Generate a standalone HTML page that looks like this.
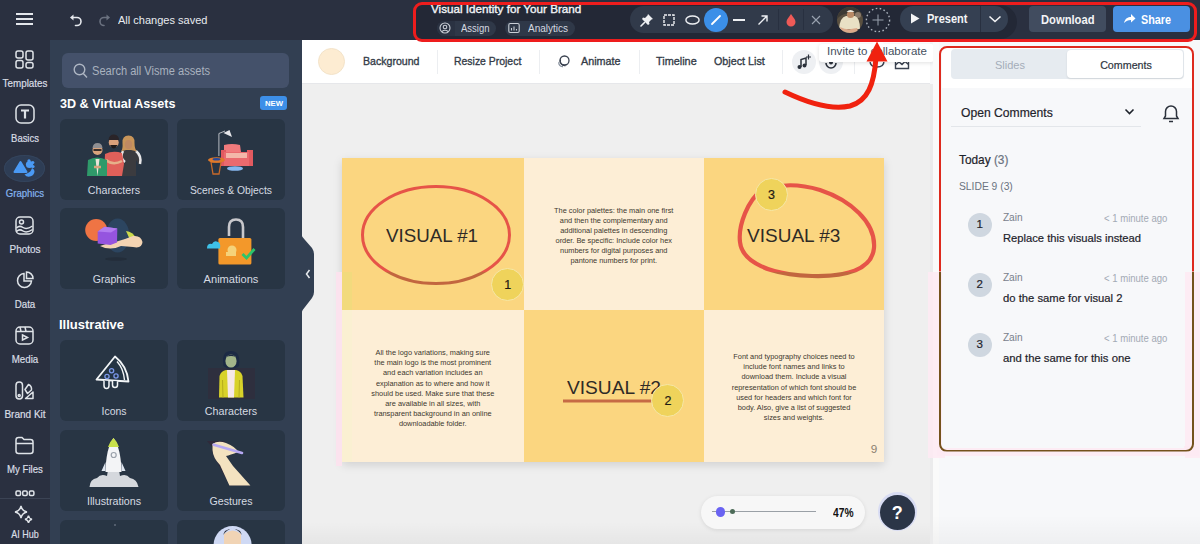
<!DOCTYPE html>
<html><head><meta charset="utf-8">
<style>
*{margin:0;padding:0;box-sizing:border-box}
html,body{width:1200px;height:544px;overflow:hidden;background:#efefef;font-family:"Liberation Sans",sans-serif}
.a{position:absolute}
.t{position:absolute;white-space:nowrap;line-height:1}
.sk{-webkit-text-stroke:0.35px currentColor}
.sk2{-webkit-text-stroke:0.2px currentColor}
.card{position:absolute;width:108px;height:81px;background:#283544;border-radius:6px}
.st{position:absolute;text-align:center;font-size:7.38px;line-height:10.17px;color:#40382e;white-space:nowrap}
.badge{position:absolute;width:33px;height:33px;border-radius:50%;background:#efd35b;border:1.5px solid #f6e7a8}
.sep{position:absolute;width:1px;background:#eceef1}
</style></head><body>
<div class="a" style="left:0;top:0;width:1200px;height:40px;background:#2a3040"></div>
<div class="a" style="left:0;top:40px;width:50px;height:504px;background:#2a3040"></div>
<div class="a" style="left:50px;top:40px;width:252px;height:504px;background:#323f52"></div>
<div class="a" style="left:302px;top:40px;width:631px;height:44px;background:#fff;border-bottom:1px solid #e6e7ea"></div>
<div class="a" style="left:302px;top:84px;width:631px;height:460px;background:#efefef"></div>
<div class="a" style="left:930px;top:40px;width:270px;height:504px;background:#f7f8fa"></div>


<div class="a" style="left:16px;top:13px;width:17px;height:2px;background:#e3e6eb"></div>
<div class="a" style="left:16px;top:18px;width:17px;height:2px;background:#e3e6eb"></div>
<div class="a" style="left:16px;top:23px;width:17px;height:2px;background:#e3e6eb"></div>
<svg class="a" style="left:68px;top:12px" width="16" height="16" viewBox="0 0 16 16"><path d="M4.5 5.5 H9 A4 4 0 0 1 9 13.5 H7.5" fill="none" stroke="#e6e9ee" stroke-width="1.6" stroke-linecap="round"/><path d="M2 5.5 L5.5 2.5 L5.5 8.5 Z" fill="#e6e9ee"/></svg>
<svg class="a" style="left:96px;top:12px" width="16" height="16" viewBox="0 0 16 16"><path d="M11.5 5.5 H8 A4 4 0 0 0 8 13.5" fill="none" stroke="#6b7280" stroke-width="1.6" stroke-linecap="round"/><path d="M14 5.5 L10.5 2.5 L10.5 8.5 Z" fill="#6b7280"/></svg>

<div class="t " id="t_saved" style="left:117.60px;top:14.57px;font-size:11.5px;color:#e8ebef;font-weight:normal;transform:scaleX(0.9588);transform-origin:left 0;">All changes saved</div>

<svg class="a" style="left:15px;top:50px" width="19" height="19" viewBox="0 0 19 19" fill="none" stroke="#dfe3e8" stroke-width="1.5"><rect x="1" y="1" width="7" height="7" rx="2"/><rect x="11" y="1" width="7" height="9" rx="2"/><rect x="1" y="10.5" width="7" height="7.5" rx="2"/><rect x="11" y="12.5" width="7" height="5.5" rx="2"/></svg>
<svg class="a" style="left:15px;top:104px" width="20" height="20" viewBox="0 0 20 20" fill="none" stroke="#dfe3e8" stroke-width="1.5"><rect x="1" y="1" width="18" height="18" rx="5"/><path d="M6 6.5 H14 M10 6.5 V14.5" stroke-width="2.2"/></svg>
<div class="a" style="left:4px;top:155px;width:40.5px;height:27px;border-radius:50%;background:#2e3d55;box-shadow:inset 0 0 0 1px #34445c"></div>
<svg class="a" style="left:10px;top:155px" width="30" height="28" viewBox="0 0 30 28"><path d="M10.5 7 L16.5 17 H4.5Z" fill="#4a9af5" stroke="#4a9af5" stroke-width="2" stroke-linejoin="round"/><circle cx="19.5" cy="9.5" r="3.6" fill="#4a9af5"/><circle cx="19" cy="5.8" r="1.6" fill="#4a9af5"/><circle cx="22.8" cy="7.5" r="1.6" fill="#4a9af5"/><circle cx="23" cy="11.5" r="1.6" fill="#4a9af5"/><path d="M14.5 19.5 A5.6 5.6 0 0 0 24.5 16 Q24 14 22 13 Q21 17 17 18.5Z" fill="#4a9af5"/></svg>
<svg class="a" style="left:15px;top:216px" width="19" height="19" viewBox="0 0 19 19" fill="none" stroke="#dfe3e8" stroke-width="1.5"><rect x="1" y="1" width="17" height="17" rx="4"/><circle cx="6.5" cy="6" r="2"/><path d="M1.5 12 Q4.5 9 8 11.5 T17.5 10"/><path d="M1.5 15.5 Q4.5 12.5 8 15 T17.5 13.5"/></svg>
<svg class="a" style="left:16px;top:271px" width="18" height="18" viewBox="0 0 18 18" fill="none" stroke="#dfe3e8" stroke-width="1.5"><path d="M8 2.5 A7 7 0 1 0 15.5 10 H8Z"/><path d="M10.5 1 A6.5 6.5 0 0 1 17 7.5 H10.5Z"/></svg>
<svg class="a" style="left:15px;top:325.5px" width="19" height="19" viewBox="0 0 19 19" fill="none" stroke="#dfe3e8" stroke-width="1.5"><rect x="1" y="1" width="17" height="17" rx="4"/><path d="M1 5.5 H18 M5 1 L6 5.5 M10 1 L11 5.5"/><path d="M7.5 9 L12.5 11.5 L7.5 14Z"/></svg>
<svg class="a" style="left:15px;top:381px" width="20" height="19" viewBox="0 0 20 19" fill="none" stroke="#dfe3e8" stroke-width="1.5" stroke-linejoin="round"><rect x="1" y="1" width="6.5" height="17" rx="3.2"/><path d="M10 8.5 L13.5 3.5 Q17 5 16.5 9 L12.5 12.5Z"/><path d="M10.5 17.5 L18 11 V17.5Z"/><circle cx="4.2" cy="14.5" r="1"/></svg>
<svg class="a" style="left:15px;top:436px" width="19" height="19" viewBox="0 0 19 19" fill="none" stroke="#dfe3e8" stroke-width="1.5"><path d="M1 4 Q1 1.5 3.5 1.5 H7 L9 3.5 H15.5 Q18 3.5 18 6 V15 Q18 17.5 15.5 17.5 H3.5 Q1 17.5 1 15Z"/><path d="M1 7.5 H18"/></svg>
<svg class="a" style="left:15px;top:490px" width="20" height="7" viewBox="0 0 20 7" fill="none" stroke="#dfe3e8" stroke-width="1.5"><rect x="1" y="1" width="4.5" height="4.5" rx="1.2"/><rect x="7.7" y="1" width="4.5" height="4.5" rx="1.2"/><rect x="14.4" y="1" width="4.5" height="4.5" rx="1.2"/></svg>
<div class="a" style="left:0;top:498px;width:50px;height:1px;background:#3b4354"></div>
<svg class="a" style="left:14px;top:505px" width="20" height="19" viewBox="0 0 20 19" fill="none" stroke="#dfe3e8" stroke-width="1.4"><path d="M7 1 Q8 6 13 7 Q8 8 7 13 Q6 8 1 7 Q6 6 7 1Z"/><path d="M14.5 10.5 Q15 13.5 18 14.3 Q15 15 14.5 18 Q14 15 11 14.3 Q14 13.5 14.5 10.5Z"/></svg>

<div class="t sk2" style="left:-125px;width:300px;text-align:center;top:78.78px;font-size:10.3px;color:#d9dde4;font-weight:normal;transform:scaleX(0.9545);transform-origin:center 0;"><span id="rl0">Templates</span></div>
<div class="t sk2" style="left:-125px;width:300px;text-align:center;top:134.08px;font-size:10.3px;color:#d9dde4;font-weight:normal;transform:scaleX(0.9166);transform-origin:center 0;"><span id="rl1">Basics</span></div>
<div class="t sk2" style="left:-125px;width:300px;text-align:center;top:188.78px;font-size:10.3px;color:#86b4ef;font-weight:normal;transform:scaleX(0.9295);transform-origin:center 0;"><span id="rl2">Graphics</span></div>
<div class="t sk2" style="left:-125px;width:300px;text-align:center;top:244.78px;font-size:10.3px;color:#d9dde4;font-weight:normal;transform:scaleX(0.9669);transform-origin:center 0;"><span id="rl3">Photos</span></div>
<div class="t sk2" style="left:-125px;width:300px;text-align:center;top:299.78px;font-size:10.3px;color:#d9dde4;font-weight:normal;transform:scaleX(0.9419);transform-origin:center 0;"><span id="rl4">Data</span></div>
<div class="t sk2" style="left:-125px;width:300px;text-align:center;top:355.08px;font-size:10.3px;color:#d9dde4;font-weight:normal;transform:scaleX(0.9448);transform-origin:center 0;"><span id="rl5">Media</span></div>
<div class="t sk2" style="left:-125px;width:300px;text-align:center;top:409.78px;font-size:10.3px;color:#d9dde4;font-weight:normal;transform:scaleX(0.9726);transform-origin:center 0;"><span id="rl6">Brand Kit</span></div>
<div class="t sk2" style="left:-125px;width:300px;text-align:center;top:464.78px;font-size:10.3px;color:#d9dde4;font-weight:normal;transform:scaleX(0.9340);transform-origin:center 0;"><span id="rl7">My Files</span></div>
<div class="t sk2" style="left:-125px;width:300px;text-align:center;top:529.88px;font-size:10.3px;color:#d9dde4;font-weight:normal;transform:scaleX(0.8734);transform-origin:center 0;"><span id="rl8">AI Hub</span></div>

<div class="a" style="left:62px;top:53px;width:227px;height:35px;background:#44516a;border-radius:6px"></div>
<svg class="a" style="left:73px;top:63px" width="15" height="16" viewBox="0 0 15 16" fill="none" stroke="#aeb6c3" stroke-width="1.4"><circle cx="6.5" cy="6.5" r="5.3"/><path d="M10.3 10.5 L14 14.5"/></svg>
<div class="a" style="left:260px;top:96px;width:27px;height:14px;background:#3d8fe8;border-radius:3px"></div>

<div class="t " id="t_search" style="left:92.10px;top:64.84px;font-size:12px;color:#a9b2bf;font-weight:normal;transform:scaleX(0.9230);transform-origin:left 0;">Search all Visme assets</div>
<div class="t " id="t_3d" style="left:59.60px;top:96.87px;font-size:13.5px;color:#ffffff;font-weight:bold;transform:scaleX(0.9329);transform-origin:left 0;">3D &amp; Virtual Assets</div>
<div class="t " style="left:123.5px;width:300px;text-align:center;top:99.53px;font-size:8px;color:#ffffff;font-weight:bold;transform:scaleX(0.9640);transform-origin:center 0;"><span id="t_new">NEW</span></div>
<div class="t " id="t_illus" style="left:59.10px;top:317.57px;font-size:13.5px;color:#ffffff;font-weight:bold;transform:scaleX(0.9625);transform-origin:left 0;">Illustrative</div>
<div class="card" style="left:60px;top:119px"></div>
<div class="card" style="left:177px;top:119px"></div>
<div class="card" style="left:60px;top:208px"></div>
<div class="card" style="left:177px;top:208px"></div>
<div class="card" style="left:60px;top:340px"></div>
<div class="card" style="left:177px;top:340px"></div>
<div class="card" style="left:60px;top:430px"></div>
<div class="card" style="left:177px;top:430px"></div>
<div class="card" style="left:60px;top:520px"></div>
<div class="card" style="left:177px;top:520px"></div>
<div class="t " style="left:-36px;width:300px;text-align:center;top:184.66px;font-size:10.8px;color:#d6dbe2;font-weight:normal;transform:scaleX(0.9903);transform-origin:center 0;"><span id="cl0">Characters</span></div>
<div class="t " style="left:81px;width:300px;text-align:center;top:184.66px;font-size:10.8px;color:#d6dbe2;font-weight:normal;transform:scaleX(0.9554);transform-origin:center 0;"><span id="cl1">Scenes &amp; Objects</span></div>
<div class="t " style="left:-36px;width:300px;text-align:center;top:273.66px;font-size:10.8px;color:#d6dbe2;font-weight:normal;transform:scaleX(0.9834);transform-origin:center 0;"><span id="cl2">Graphics</span></div>
<div class="t " style="left:81px;width:300px;text-align:center;top:273.66px;font-size:10.8px;color:#d6dbe2;font-weight:normal;transform:scaleX(1.0258);transform-origin:center 0;"><span id="cl3">Animations</span></div>
<div class="t " style="left:-36px;width:300px;text-align:center;top:405.66px;font-size:10.8px;color:#d6dbe2;font-weight:normal;transform:scaleX(0.9685);transform-origin:center 0;"><span id="cl4">Icons</span></div>
<div class="t " style="left:81px;width:300px;text-align:center;top:405.66px;font-size:10.8px;color:#d6dbe2;font-weight:normal;transform:scaleX(0.9903);transform-origin:center 0;"><span id="cl5">Characters</span></div>
<div class="t " style="left:-36px;width:300px;text-align:center;top:495.66px;font-size:10.8px;color:#d6dbe2;font-weight:normal;transform:scaleX(0.9888);transform-origin:center 0;"><span id="cl6">Illustrations</span></div>
<div class="t " style="left:81px;width:300px;text-align:center;top:495.66px;font-size:10.8px;color:#d6dbe2;font-weight:normal;transform:scaleX(0.9815);transform-origin:center 0;"><span id="cl7">Gestures</span></div>
<!-- ILLUSTRATIONS -->
<svg class="a" style="left:0;top:0" width="302" height="544" viewBox="0 0 302 544">
<!-- characters 3D -->
<path d="M121 176 L121 152 Q128 148 136 151 L141 160 L139 165 L136 160 L136 176Z" fill="#3b3b3f"/>
<path d="M123 151 Q119 158 125 162 M136 151 Q142 156 140 164" stroke="#e8e8ea" stroke-width="2.5" fill="none"/>
<path d="M122.5 143 Q122 135.5 128.5 135.5 Q135 135.5 134.5 143 Q134.5 149 137 151.5 L131 150 L126 150 L121 151.5 Q123 149 122.5 143Z" fill="#c8955a"/>
<ellipse cx="128.5" cy="144.5" rx="3.6" ry="4.5" fill="#c08a62"/>
<path d="M104 176 L105 154 Q113 150 122 153 L124 164 L122 176Z" fill="#e0605a"/>
<path d="M106 160 Q113 166 122 161" stroke="#e6b08a" stroke-width="2.5" fill="none"/>
<circle cx="113.7" cy="142.5" r="5" fill="#d9a07a"/>
<path d="M108.5 140 Q109 134.5 114 134.5 Q119 135 119 140Z" fill="#2a2428"/>
<path d="M110 145 Q113.7 152 117.5 145Z" fill="#1f1a1a"/>
<path d="M87 176 L88 160 Q97 155 107 160 L107 176Z" fill="#2f9a6a"/>
<path d="M95.5 159 L97.5 176 L99.5 159Z" fill="#e9e4d8"/>
<path d="M94 167 L101 167" stroke="#d6a37d" stroke-width="2.5"/>
<circle cx="97.5" cy="150" r="5" fill="#d9a37c"/>
<path d="M92.5 148 Q93 143 97.5 143 Q102 143 102.5 148Z" fill="#8f8f92"/>
<rect x="93.5" y="149" width="8" height="2" fill="#3a2f2a"/>
<!-- scenes & objects -->
<path d="M218.9 156 V133.5 L225 131" stroke="#c6c9cf" stroke-width="0.9" fill="none"/>
<path d="M223.5 133 L229.5 130 L232 137 Z" fill="#e6e6ea"/>
<path d="M224 145 Q232 143 240 145 L241 152 H224Z" fill="#f07a7c"/>
<path d="M221 150 H226 V166 H221Z M247 150 H253 V166 H247Z" fill="#e25a60"/>
<rect x="224" y="152" width="25" height="14" fill="#ea6a6e"/>
<rect x="226" y="153" width="21" height="5" fill="#f3b7a9"/>
<ellipse cx="235" cy="168.5" rx="8" ry="2.3" fill="#86b7ee"/>
<path d="M211 162 L221 162 L219 174 L213 174Z" fill="none" stroke="#c86a2a" stroke-width="1.3"/>
<ellipse cx="216.5" cy="160" rx="8.5" ry="2.8" fill="#e07a2a"/>
<ellipse cx="216.5" cy="159.3" rx="4" ry="1.2" fill="#2a4a9a"/>
<!-- graphics 3D -->
<ellipse cx="116" cy="259" rx="11" ry="1.8" fill="#232d3a"/>
<ellipse cx="117.6" cy="235.4" rx="11.7" ry="17" fill="#2c4560"/>
<circle cx="96.2" cy="230" r="11" fill="#ef7444"/>
<path d="M126 231 Q133 232 136 238 L131 242Z" fill="#cbd94a"/>
<path d="M100 246 Q110 251 121 246 L133 247 Q142 249 142.5 242 Q141 235 133 236 L125 239 Q117 242 109 243 Z" fill="#f3d3b2"/>
<path d="M97.7 231.5 L104.5 226.8 L117.3 228.5 L117 242.5 L110.5 245 L97.7 243.5Z" fill="#9554df"/>
<path d="M97.7 231.5 L104.5 226.8 L117.3 228.5 L111 232.5Z" fill="#b27cf0"/>
<!-- animations -->
<path d="M229 236 V227 Q229 219.5 236 219.5 Q243 219.5 243 227 V238" stroke="#c8c8cc" stroke-width="2.6" fill="none"/>
<rect x="218.4" y="238" width="33" height="26.5" rx="1.5" fill="#f3982a"/>
<circle cx="232" cy="250" r="4.5" fill="#f5d27a"/>
<path d="M226 252 H236 V256 H226Z" fill="#f5d27a"/>
<path d="M207 248.5 Q207 243 212 244 Q214 240 218 242 Q221 243 220 248.5Z" fill="#3ec1e8"/>
<path d="M242.5 254 L246.5 258 L254.5 249" stroke="#2bc46b" stroke-width="2.8" fill="none"/>
<!-- icons pizza -->
<path d="M115 356.5 L96.5 379.5 L128.5 381.5 Q127 366 115 356.5Z" fill="#243444" stroke="#f2f5f7" stroke-width="1.8" stroke-linejoin="round"/>
<path d="M117 361.5 Q123.5 368.5 124.5 380" fill="none" stroke="#f2f5f7" stroke-width="1.4"/>
<path d="M104 380.5 V385.5 Q104 388.5 106.5 388.5 Q109 388.5 109 385.5 V381 M112.5 381 V385 Q112.5 387.5 115 387.5 Q117.5 387.5 117.5 385 V381.2" fill="#243444" stroke="#f2f5f7" stroke-width="1.5"/>
<circle cx="111.6" cy="370.7" r="2.1" fill="none" stroke="#7b98ea" stroke-width="1.3"/>
<circle cx="107" cy="376.5" r="2.1" fill="none" stroke="#7b98ea" stroke-width="1.3"/>
<circle cx="116" cy="376" r="2.1" fill="none" stroke="#7b98ea" stroke-width="1.3"/>
<!-- characters illustrative -->
<rect x="208" y="368" width="47" height="31" fill="#2e2f3e"/>
<path d="M223.5 366 Q221 351 231 351 Q241 351 239 366 Q235 369 231 369 Q227 369 223.5 366Z" fill="#1c2a44"/>
<ellipse cx="231" cy="361" rx="5.6" ry="6.6" fill="#a3b58a"/>
<path d="M226 357 Q231 352 236 357 Q231 355 226 357Z" fill="#1c2a44"/>
<path d="M219 397.5 L219.5 376 Q221 371 226 370 L236 370 Q241 371 242.5 376 L243.5 397.5Z" fill="#d8d22a"/>
<path d="M227 370 L235 370 L234 397.5 L228 397.5Z" fill="#f6e8e8"/>
<path d="M222.5 380 L223 397.5 M239.5 380 L239 397.5" stroke="#b5ad1e" stroke-width="1"/>
<!-- rocket -->
<path d="M89.5 487 Q90 479 97 478 Q101 473 107 476 L108 470 H119 L120 476 Q126 473 130 478 Q137 479 138.5 487Z" fill="#d5d8dd"/>
<path d="M113.5 438 Q121 448 121.5 472 H105.5 Q106 448 113.5 438Z" fill="#f3f4f6"/>
<path d="M113.5 438 Q117.5 442 119 447 H108 Q109.5 442 113.5 438Z" fill="#c8e04a"/>
<circle cx="113.7" cy="455" r="2.5" fill="none" stroke="#9aa1ab" stroke-width="1.2"/>
<path d="M105.5 462 L101.5 471 L105.5 471Z M121.5 462 L125.5 471 L121.5 471Z" fill="#dfe6f0"/>
<!-- gestures -->
<path d="M207 441 L225 441 L227 460 L250 485.5 L229.5 485.5 L217 462 Q212 456 212 447Z" fill="#2f2a3a"/>
<path d="M212.5 444 Q218 440 226 443 Q236 447 238 452 Q230 455 226 456 L233 466 L250.4 485.5 L229.4 485.5 L220 465 Q213 458 212.5 450Z" fill="#f3e2c0"/>
<path d="M213.7 444.7 L242 453" stroke="#b6a8f2" stroke-width="2.6" stroke-linecap="round"/>
<!-- row 5 -->
<circle cx="232.6" cy="545" r="19" fill="#cfd9f4"/>
<path d="M224 544 V534 Q232.6 527 241 534 V544Z" fill="#f1d4b5"/>
<path d="M223 535 Q232.6 522 242 535 L240 531 Q232.6 526 225 531Z" fill="#2a2a2e"/>
<circle cx="115" cy="525" r="0.8" fill="#8a93a0"/>
</svg>

<!-- collapse handle -->

<svg class="a" style="left:301px;top:234px" width="15" height="80" viewBox="0 0 15 80"><path d="M0 0 Q1 3 4 6 L11 14 Q13 17 13 20 V58 Q13 61 11 64 L4 73 Q1 76 0 80Z" fill="#323f52"/><path d="M8.5 36 L5.5 40 L8.5 44" fill="none" stroke="#e8ebef" stroke-width="1.5"/></svg>

<div class="a" style="left:318px;top:48px;width:27px;height:27px;border-radius:50%;background:#fdecd2;border:1px solid #f3e3c9"></div>
<div class="sep" style="left:437px;top:50px;height:24px"></div>
<div class="sep" style="left:539px;top:50px;height:24px"></div>
<svg class="a" style="left:556px;top:54px" width="15" height="15" viewBox="0 0 15 15" fill="none" stroke="#3a4250" stroke-width="1.3"><circle cx="8.5" cy="6.5" r="4.5"/><path d="M4.5 5.5 A4.5 4.5 0 0 0 9.5 11.5"/><path d="M3 8 A3.5 3.5 0 0 0 7 12.5" stroke="#8a93a0"/></svg>
<div class="sep" style="left:639px;top:50px;height:24px"></div>
<div class="sep" style="left:782px;top:50px;height:24px"></div>
<div class="a" style="left:792px;top:50px;width:24px;height:24px;border-radius:50%;background:#eef0f3"></div>
<svg class="a" style="left:795px;top:53px" width="18" height="18" viewBox="0 0 18 18"><path d="M6 14 V6.5 L11 5 V12" fill="none" stroke="#2a303a" stroke-width="1.5"/><circle cx="4.5" cy="14" r="2" fill="#2a303a"/><circle cx="9.5" cy="12.5" r="2" fill="#2a303a"/><path d="M13.5 1.5 V6.5 M11 4 H16" stroke="#2a303a" stroke-width="1.2"/></svg>
<div class="a" style="left:819px;top:50px;width:24px;height:24px;border-radius:50%;background:#eef0f3"></div>
<svg class="a" style="left:823px;top:54px" width="16" height="16" viewBox="0 0 16 16" fill="none" stroke="#2a303a" stroke-width="1.6"><path d="M3 9 A5 5 0 0 0 13 9"/><circle cx="8" cy="8.5" r="1.2" fill="#2a303a"/></svg>
<div class="sep" style="left:854px;top:50px;height:24px"></div>
<svg class="a" style="left:868px;top:57px" width="18" height="12" viewBox="0 0 18 12" fill="none" stroke="#3a4250" stroke-width="1.4"><path d="M2 4 Q2 10 9 10 Q16 10 16 4"/></svg>
<svg class="a" style="left:894px;top:56px" width="16" height="14" viewBox="0 0 16 14" fill="none" stroke="#3a4250" stroke-width="1.4"><path d="M1.5 4 V12.5 H14.5 V4"/><path d="M1.5 9 L5 6 L8 8.5 L11 5.5 L14.5 8.5"/></svg>

<div class="t sk" id="tb0" style="left:362.60px;top:56.31px;font-size:11.8px;color:#333b47;font-weight:normal;transform:scaleX(0.8973);transform-origin:left 0;">Background</div>
<div class="t sk" id="tb1" style="left:454.10px;top:56.31px;font-size:11.8px;color:#333b47;font-weight:normal;transform:scaleX(0.8848);transform-origin:left 0;">Resize Project</div>
<div class="t sk" id="tb2" style="left:581.40px;top:56.31px;font-size:11.8px;color:#333b47;font-weight:normal;transform:scaleX(0.9126);transform-origin:left 0;">Animate</div>
<div class="t sk" id="tb3" style="left:656.30px;top:56.31px;font-size:11.8px;color:#333b47;font-weight:normal;transform:scaleX(0.9221);transform-origin:left 0;">Timeline</div>
<div class="t sk" id="tb4" style="left:713.50px;top:56.31px;font-size:11.8px;color:#333b47;font-weight:normal;transform:scaleX(0.9115);transform-origin:left 0;">Object List</div>
<div class="a" style="left:819px;top:44px;width:115px;height:18px;background:#fff;border-radius:3px;box-shadow:0 1px 4px rgba(0,0,0,0.12)"></div>
<svg class="a" style="left:872px;top:36px" width="12" height="8" viewBox="0 0 12 8"><path d="M0 8 L6 1 L12 8Z" fill="#fff"/></svg>
<div class="t " id="t_invite" style="left:827.10px;top:45.61px;font-size:10.5px;color:#46505e;font-weight:normal;transform:scaleX(1.0981);transform-origin:left 0;">Invite to collaborate</div>

<div class="a" style="left:302px;top:522px;width:631px;height:22px;background:linear-gradient(rgba(0,0,0,0),rgba(0,0,0,0.04))"></div>
<div class="a" style="left:342px;top:158px;width:542px;height:304px;box-shadow:0 3px 9px rgba(0,0,0,0.13)"></div>
<div class="a" style="left:342px;top:158px;width:181.5px;height:152px;background:#fbd680"></div>
<div class="a" style="left:523.5px;top:158px;width:180.5px;height:152px;background:#fdeed6"></div>
<div class="a" style="left:704px;top:158px;width:180px;height:152px;background:#fbd680"></div>
<div class="a" style="left:342px;top:310px;width:181.5px;height:152px;background:#fdeed6"></div>
<div class="a" style="left:523.5px;top:310px;width:180.5px;height:152px;background:#fbd680"></div>
<div class="a" style="left:704px;top:310px;width:180px;height:152px;background:#fdeed6"></div>
<div class="st" style="left:523.5px;width:180.5px;top:205.6px">The color palettes: the main one first<br>and then the complementary and<br>additional palettes in descending<br>order. Be specific: Include color hex<br>numbers for digital purposes and<br>pantone numbers for print.</div>
<div class="st" style="left:342px;width:181.5px;top:348px">All the logo variations, making sure<br>the main logo is the most prominent<br>and each variation includes an<br>explanation as to where and how it<br>should be used. Make sure that these<br>are available in all sizes, with<br>transparent background in an online<br>downloadable folder.</div>
<div class="st" style="left:704px;width:180px;top:352px">Font and typography choices need to<br>include font names and links to<br>download them. Include a visual<br>representation of which font should be<br>used for headers and which font for<br>body. Also, give a list of suggested<br>sizes and weights.</div>

<div class="a" style="left:336px;top:272px;width:6px;height:194px;background:#fbe3ee"></div><div class="a" style="left:342px;top:272px;width:10px;height:38px;background:#f0da7c;opacity:0.85"></div><div class="a" style="left:342px;top:310px;width:10px;height:152px;background:#faefd2;opacity:0.9"></div>
<div class="t " id="vis1" style="left:386.30px;top:225.52px;font-size:19px;color:#2e2a26;font-weight:normal;transform:scaleX(0.9861);transform-origin:left 0;">VISUAL #1</div>
<div class="t " id="vis3" style="left:747.10px;top:225.52px;font-size:19px;color:#2e2a26;font-weight:normal;">VISUAL #3</div>
<div class="t " id="vis2" style="left:566.50px;top:377.72px;font-size:19px;color:#2e2a26;font-weight:normal;transform:scaleX(1.0075);transform-origin:left 0;">VISUAL #2</div>
<div class="t " style="left:723.9px;width:300px;text-align:center;top:445.04px;font-size:10px;color:#8a7f70;font-weight:normal;transform:scaleX(1.1685);transform-origin:center 0;"><span id="t_9">9</span></div>
<svg class="a" style="left:342px;top:158px" width="542" height="304" viewBox="342 158 542 304">
<defs><clipPath id="ctop"><rect x="300" y="100" width="700" height="172"/></clipPath><clipPath id="cbot"><rect x="300" y="272" width="700" height="100"/></clipPath></defs>
<g id="ann" fill="none" stroke-linecap="round"><ellipse cx="436" cy="235" rx="73.5" ry="48.5" stroke-width="3"/>
<path d="M762 190 C748 200 738 225 740 242 C742 262 770 275 812 276 C845 277 872 270 874 248 C876 222 850 200 820 190 C800 184 784 184 770 188" stroke-width="4.2"/></g>
<use href="#ann" clip-path="url(#ctop)" stroke="#e65448"/>
<use href="#ann" clip-path="url(#cbot)" stroke="#c2663f"/>
<path d="M563 401 H652" stroke="#c66a45" stroke-width="3"/>
</svg>
<div class="badge" style="left:491px;top:268px"></div>
<div class="badge" style="left:755px;top:178px"></div>
<div class="badge" style="left:651px;top:384px"></div>

<div class="t sk2" style="left:357.8px;width:300px;text-align:center;top:278.62px;font-size:12.5px;color:#1e1a14;font-weight:normal;"><span id="b1">1</span></div>
<div class="t sk2" style="left:621.6px;width:300px;text-align:center;top:188.82px;font-size:12.5px;color:#1e1a14;font-weight:normal;"><span id="b3">3</span></div>
<div class="t sk2" style="left:518px;width:300px;text-align:center;top:394.62px;font-size:12.5px;color:#1e1a14;font-weight:normal;"><span id="b2">2</span></div>

<div class="a" style="left:701px;top:496px;width:164px;height:33px;background:#f7f7f7;border-radius:16.5px;box-shadow:0 1px 4px rgba(0,0,0,0.10)"></div>
<div class="a" style="left:712px;top:511px;width:104px;height:1.2px;background:#9aa0a6"></div>
<div class="a" style="left:715.5px;top:507px;width:9.5px;height:9.5px;border-radius:50%;background:#6a63f2"></div>
<div class="a" style="left:729.5px;top:509px;width:5px;height:5px;border-radius:50%;background:#4c6b58"></div>
<div class="a" style="left:878px;top:492px;width:39px;height:39px;border-radius:50%;background:#d8dcf3"></div>
<div class="a" style="left:880px;top:494.5px;width:35px;height:35px;border-radius:50%;background:#2b3547"></div>

<div class="t " id="t_47" style="left:832.60px;top:505.57px;font-size:13.5px;color:#111;font-weight:bold;transform:scaleX(0.7584);transform-origin:left 0;">47%</div>
<div class="t " style="left:747.2px;width:300px;text-align:center;top:503.76px;font-size:18px;color:#fff;font-weight:bold;"><span id="t_q">?</span></div>
<svg class="a" style="left:0;top:0" width="1200" height="544" viewBox="0 0 1200 544">
<path d="M785 92 C810 104 832 110 850 106 C868 101 874 84 876 58" fill="none" stroke="#f0220f" stroke-width="5" stroke-linecap="round"/>
<path d="M877 41.5 L866.5 61.5 L887.5 61.5Z" fill="#f0220f"/>
</svg>

<div class="a" style="left:933px;top:40px;width:6px;height:504px;background:#fafafa"></div>
<div class="a" style="left:930px;top:84px;width:3px;height:460px;background:#ebebec"></div>
<div class="a" style="left:933px;top:515px;width:267px;height:29px;background:linear-gradient(rgba(0,0,0,0),rgba(0,0,0,0.035))"></div>
<div class="a" style="left:942px;top:48px;width:250px;height:40px;background:#ffffff"></div>
<div class="a" style="left:951px;top:49px;width:233px;height:30px;background:#e6ebf0;border-radius:4px"></div>
<div class="a" style="left:1067px;top:50px;width:116px;height:28px;background:#fff;border-radius:4px;box-shadow:0 1px 2px rgba(0,0,0,0.10)"></div>
<svg class="a" style="left:1124px;top:108px" width="11" height="8" viewBox="0 0 11 8"><path d="M1.5 1.5 L5.5 5.5 L9.5 1.5" fill="none" stroke="#1e232b" stroke-width="1.6"/></svg>
<div class="a" style="left:951px;top:126px;width:190px;height:1px;background:#e3e6ea"></div>
<svg class="a" style="left:1161px;top:103px" width="20" height="21" viewBox="0 0 20 21" fill="none" stroke="#2b313b" stroke-width="1.5"><path d="M3 15.5 H17 L15.5 13 V8.5 A5.5 5.5 0 0 0 4.5 8.5 V13Z"/><path d="M8 18.5 H12"/></svg>

<div class="a" style="left:928px;top:272px;width:17px;height:186px;background:#fdeaf3;opacity:0.9"></div>
<div class="a" style="left:1185px;top:272px;width:15px;height:186px;background:#fdeaf3;opacity:0.9"></div>
<div class="a" style="left:937px;top:446px;width:262px;height:10px;background:#fdeaf3;opacity:0.9"></div>
<div class="a" style="left:942px;top:272px;width:242px;height:176px;background:#f7f8fa"></div>
<div class="t " style="left:860px;width:300px;text-align:center;top:59.99px;font-size:11px;color:#a4adb9;font-weight:normal;"><span id="t_slides">Slides</span></div>
<div class="t sk2" style="left:975.7px;width:300px;text-align:center;top:59.99px;font-size:11px;color:#2d3440;font-weight:normal;transform:scaleX(0.9720);transform-origin:center 0;"><span id="t_comments">Comments</span></div>
<div class="t sk2" id="t_open" style="left:961.10px;top:106.87px;font-size:12.2px;color:#1e232b;font-weight:normal;transform:scaleX(0.9965);transform-origin:left 0;">Open Comments</div>
<div class="t sk2" id="t_today" style="left:959.00px;top:154.37px;font-size:12.2px;color:#1e232b;font-weight:normal;transform:scaleX(0.9719);transform-origin:left 0;">Today <span style="color:#6b7380">(3)</span></div>
<div class="t " id="t_slide9" style="left:958.60px;top:180.99px;font-size:11px;color:#6b7380;font-weight:normal;transform:scaleX(0.9362);transform-origin:left 0;">SLIDE 9 (3)</div>
<div class="a" style="left:967.7px;top:212.5px;width:24px;height:24px;border-radius:50%;background:#cfd7e0"></div>
<div class="t sk2" style="left:829.7px;width:300px;text-align:center;top:218.97px;font-size:11.5px;color:#1e232b;font-weight:normal;"><span id="n0">1</span></div>
<div class="t " id="z0" style="left:1002.90px;top:213.47px;font-size:10.2px;color:#7a818c;font-weight:normal;">Zain</div>
<div class="t " id="m0" style="left:1103.90px;top:213.87px;font-size:10.2px;color:#a3aab5;font-weight:normal;transform:scaleX(0.9367);transform-origin:left 0;">&lt; 1 minute ago</div>
<div class="t sk2" id="c0" style="left:1002.60px;top:233.07px;font-size:11.5px;color:#1e232b;font-weight:normal;transform:scaleX(0.9724);transform-origin:left 0;">Replace this visuals instead</div>
<div class="a" style="left:967.7px;top:272.5px;width:24px;height:24px;border-radius:50%;background:#cfd7e0"></div>
<div class="t sk2" style="left:829.7px;width:300px;text-align:center;top:278.97px;font-size:11.5px;color:#1e232b;font-weight:normal;"><span id="n1">2</span></div>
<div class="t " id="z1" style="left:1002.90px;top:273.47px;font-size:10.2px;color:#7a818c;font-weight:normal;">Zain</div>
<div class="t " id="m1" style="left:1103.90px;top:273.87px;font-size:10.2px;color:#a3aab5;font-weight:normal;transform:scaleX(0.9367);transform-origin:left 0;">&lt; 1 minute ago</div>
<div class="t sk2" id="c1" style="left:1002.60px;top:293.07px;font-size:11.5px;color:#1e232b;font-weight:normal;transform:scaleX(0.9788);transform-origin:left 0;">do the same for visual 2</div>
<div class="a" style="left:967.7px;top:332.5px;width:24px;height:24px;border-radius:50%;background:#cfd7e0"></div>
<div class="t sk2" style="left:829.7px;width:300px;text-align:center;top:338.97px;font-size:11.5px;color:#1e232b;font-weight:normal;"><span id="n2">3</span></div>
<div class="t " id="z2" style="left:1002.90px;top:333.47px;font-size:10.2px;color:#7a818c;font-weight:normal;">Zain</div>
<div class="t " id="m2" style="left:1103.90px;top:333.87px;font-size:10.2px;color:#a3aab5;font-weight:normal;transform:scaleX(0.9367);transform-origin:left 0;">&lt; 1 minute ago</div>
<div class="t sk2" id="c2" style="left:1002.60px;top:353.07px;font-size:11.5px;color:#1e232b;font-weight:normal;transform:scaleX(0.9824);transform-origin:left 0;">and the same for this one</div>
<div class="a" style="left:939px;top:45.5px;width:255px;height:406px;border:2.7px solid #de2a1e;border-radius:8px;clip-path:inset(0 0 180px 0)"></div>
<div class="a" style="left:939px;top:45.5px;width:255px;height:406px;border:2.8px solid #74521c;border-radius:8px;clip-path:inset(226.5px 0 0 0)"></div>

<div class="a" style="left:416px;top:5px;width:601px;height:34px;background:#232836;border-radius:0 17px 17px 0"></div>
<div class="a" style="left:437px;top:21px;width:59px;height:15px;background:#2f3848;border-radius:8px"></div>
<div class="a" style="left:437px;top:21px;width:18px;height:15px;background:#2a3242;border-radius:8px 0 0 8px"></div>
<svg class="a" style="left:439px;top:22px" width="12" height="12" viewBox="0 0 12 12"><circle cx="6" cy="6" r="5" fill="none" stroke="#c9ced6" stroke-width="1.1"/><circle cx="6" cy="5" r="1.8" fill="none" stroke="#c9ced6" stroke-width="1.1"/><path d="M3 9.5 Q6 7 9 9.5" fill="none" stroke="#c9ced6" stroke-width="1.1"/></svg>
<div class="a" style="left:505px;top:21px;width:70px;height:15px;background:#2f3848;border-radius:8px"></div>
<svg class="a" style="left:508px;top:22px" width="12" height="12" viewBox="0 0 12 12"><rect x="0.8" y="1.5" width="10.4" height="9" rx="1.5" fill="none" stroke="#c9ced6" stroke-width="1.1"/><path d="M3.5 8.5V6 M6 8.5V4.5 M8.5 8.5V7" stroke="#c9ced6" stroke-width="1.1"/></svg>
<div class="a" style="left:630px;top:6px;width:203px;height:27px;background:#313a4a;border-radius:14px"></div>
<svg class="a" style="left:640px;top:13px" width="14" height="14" viewBox="0 0 14 14"><path d="M8 1 L13 6 L11.5 6.5 L9 9 L9.5 11 L8 12 L2 6 L3 4.5 L5 5 L7.5 2.5 Z" fill="#eef0f3"/><path d="M4.5 9.5 L1 13" stroke="#eef0f3" stroke-width="1.6" stroke-linecap="round"/></svg>
<svg class="a" style="left:663px;top:14px" width="12" height="12" viewBox="0 0 12 12"><rect x="1" y="1" width="10" height="10" fill="none" stroke="#eef0f3" stroke-width="1.4" stroke-dasharray="3 1"/></svg>
<svg class="a" style="left:685px;top:15px" width="15" height="10" viewBox="0 0 15 10"><ellipse cx="7.5" cy="5" rx="6.6" ry="4" fill="none" stroke="#eef0f3" stroke-width="1.4"/></svg>
<div class="a" style="left:704px;top:8px;width:24px;height:24px;border-radius:50%;background:#3b8fe8"></div>
<svg class="a" style="left:710px;top:14px" width="12" height="12" viewBox="0 0 12 12"><path d="M2 10 L10 2" stroke="#fff" stroke-width="1.8" stroke-linecap="round"/></svg>
<div class="a" style="left:733px;top:19px;width:12px;height:2px;background:#eef0f3"></div>
<svg class="a" style="left:757px;top:14px" width="12" height="12" viewBox="0 0 12 12"><path d="M1.5 10.5 L10 2 M4.5 2 H10 V7.5" fill="none" stroke="#eef0f3" stroke-width="1.4"/></svg>
<div class="a" style="left:778px;top:9px;width:1px;height:21px;background:#283040"></div>
<svg class="a" style="left:785px;top:13px" width="12" height="14" viewBox="0 0 12 14"><path d="M6 1 C8 4 10.5 6.5 10.5 9 A4.5 4.5 0 0 1 1.5 9 C1.5 6.5 4 4 6 1Z" fill="#ef5a57"/></svg>
<div class="a" style="left:803px;top:9px;width:1px;height:21px;background:#283040"></div>
<svg class="a" style="left:811px;top:15px" width="10" height="10" viewBox="0 0 10 10"><path d="M1 1 L9 9 M9 1 L1 9" stroke="#9aa3b0" stroke-width="1.1"/></svg>
<svg class="a" style="left:837px;top:6.5px" width="26" height="26" viewBox="0 0 26 26"><defs><clipPath id="avc"><circle cx="13" cy="13" r="13"/></clipPath></defs><g clip-path="url(#avc)"><rect width="26" height="26" fill="#5a5040"/><path d="M0 0 H26 V10 Q20 4 12 6 Q4 7 0 12Z" fill="#3d3a34"/><circle cx="21" cy="8" r="3" fill="#8a7a6a"/><path d="M2 22 Q3 10 9 9 H18 Q23 11 23 22Z" fill="#e9e0c4"/><circle cx="13.5" cy="7.5" r="3.6" fill="#b98a66"/><path d="M9.5 5 Q13.5 1 17.5 5Z" fill="#ece8dc"/><path d="M3 20 Q9 23 14 22 L20 21 Q22 24 18 26 H5Z" fill="#d9a98a"/><path d="M4 24 Q13 28 22 24 V26 H4Z" fill="#7fa08a"/></g></svg>
<svg class="a" style="left:865px;top:6.5px" width="26" height="26" viewBox="0 0 26 26"><circle cx="13" cy="13" r="11.6" fill="none" stroke="#aab1bc" stroke-width="1.4" stroke-dasharray="1.6 2.4"/><path d="M13 7.5 V18.5 M7.5 13 H18.5" stroke="#9aa2ae" stroke-width="1"/></svg>
<div class="a" style="left:900px;top:6px;width:108px;height:26px;background:#354052;border-radius:13px"></div>
<div class="a" style="left:980px;top:6px;width:1px;height:26px;background:#283040"></div>
<svg class="a" style="left:910px;top:13px" width="10" height="11" viewBox="0 0 10 11"><path d="M1 0.5 L9.5 5.5 L1 10.5Z" fill="#f3f4f6"/></svg>
<svg class="a" style="left:988px;top:15px" width="14" height="8" viewBox="0 0 14 8"><path d="M1.5 1.5 L7 6.5 L12.5 1.5" fill="none" stroke="#f3f4f6" stroke-width="1.6"/></svg>
<div class="a" style="left:1029px;top:6px;width:77px;height:26px;background:#414c5f;border-radius:4px"></div>
<div class="a" style="left:1113px;top:6px;width:77px;height:26px;background:#4a90e2;border-radius:4px"></div>
<svg class="a" style="left:1123px;top:13px" width="13" height="11" viewBox="0 0 13 11"><path d="M1 10 C2 5.5 5 4 8 4 V1 L12.5 5.5 L8 9.5 V7 C5 7 3 8 1 10Z" fill="#fff"/></svg>

<div class="t sk" id="t_title" style="left:430.60px;top:4.27px;font-size:11.5px;color:#f3f4f6;font-weight:normal;transform:scaleX(1.0148);transform-origin:left 0;">Visual Identity for Your Brand</div>
<div class="t " id="t_assign" style="left:461.30px;top:23.11px;font-size:10.5px;color:#d5d9e0;font-weight:normal;transform:scaleX(0.9043);transform-origin:left 0;">Assign</div>
<div class="t " id="t_analytics" style="left:528.30px;top:23.11px;font-size:10.5px;color:#d5d9e0;font-weight:normal;transform:scaleX(0.9520);transform-origin:left 0;">Analytics</div>
<div class="t " id="t_present" style="left:927.20px;top:13.04px;font-size:12px;color:#f3f4f6;font-weight:bold;transform:scaleX(0.9198);transform-origin:left 0;">Present</div>
<div class="t " id="t_download" style="left:1040.50px;top:14.04px;font-size:12px;color:#f3f4f6;font-weight:bold;transform:scaleX(0.9332);transform-origin:left 0;">Download</div>
<div class="t " id="t_share" style="left:1141.10px;top:14.04px;font-size:12px;color:#ffffff;font-weight:bold;transform:scaleX(0.8993);transform-origin:left 0;">Share</div>
<div class="a" style="left:412.5px;top:2px;width:784px;height:39.8px;border:3px solid #ee1d1d;border-radius:9px"></div>
</body></html>
